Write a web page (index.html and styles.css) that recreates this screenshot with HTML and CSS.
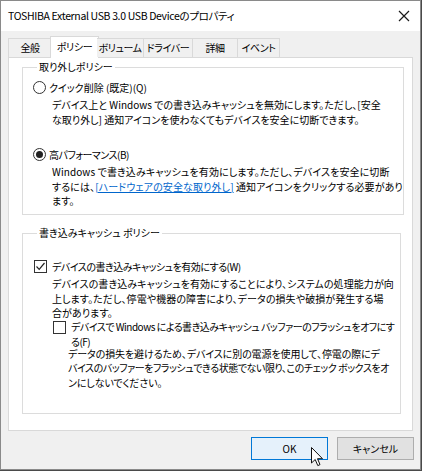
FILE: index.html
```html
<!DOCTYPE html>
<html lang="ja">
<head>
<meta charset="utf-8">
<link rel="stylesheet" href="styles.css">
</head>
<body>
<div class="window">
  <div class="titlebar">
    <span class="title">TOSHIBA External USB 3.0 USB Deviceのプロパティ</span>
    <svg class="close" width="12" height="12" viewBox="0 0 12 12"><path d="M1 1 L11 11 M11 1 L1 11" stroke="#1a1a1a" stroke-width="1.2" fill="none"/></svg>
  </div>
  <div class="client">
    <div class="tabs">
      <div class="tab t1">全般</div>
      <div class="tab t2 selected">ポリシー</div>
      <div class="tab t3">ボリューム</div>
      <div class="tab t4">ドライバー</div>
      <div class="tab t5">詳細</div>
      <div class="tab t6">イベント</div>
    </div>
    <div class="panel">
      <fieldset class="group g1">
        <legend>取り外しポリシー</legend>
        <div class="option opt1"><span class="radio"></span><span>クイック削除 (既定)(Q)</span></div>
        <p class="desc d1">デバイス上と Windows での書き込みキャッシュを無効にします。ただし、[安全<br>な取り外し] 通知アイコンを使わなくてもデバイスを安全に切断できます。</p>
        <div class="option opt2"><span class="radio checked"></span><span>高パフォーマンス(B)</span></div>
        <p class="desc d2">Windows で書き込みキャッシュを有効にします。ただし、デバイスを安全に切断<br>するには、<span class="link">[ハードウェアの安全な取り外し]</span> 通知アイコンをクリックする必要があり<br>ます。</p>
      </fieldset>
      <fieldset class="group g2">
        <legend>書き込みキャッシュ ポリシー</legend>
        <div class="option opt3"><span class="check checked"><svg width="11" height="11" viewBox="0 0 11 11"><path d="M1.5 5.5 L4.2 8.3 L9.5 2" stroke="#222" stroke-width="1.2" fill="none"/></svg></span><span>デバイスの書き込みキャッシュを有効にする(W)</span></div>
        <p class="desc d3">デバイスの書き込みキャッシュを有効にすることにより、システムの処理能力が向<br>上します。ただし、停電や機器の障害により、データの損失や破損が発生する場<br>合があります。</p>
        <div class="option opt4"><span class="check"></span><span class="label2">デバイスで Windows による書き込みキャッシュ バッファーのフラッシュをオフにす<br>る(F)</span></div>
        <p class="desc d4">データの損失を避けるため、デバイスに別の電源を使用して、停電の際にデ<br><span class="tight">バイスのバッファーをフラッシュできる状態でない限り、このチェック ボックスをオ</span><br>ンにしないでください。</p>
      </fieldset>
    </div>
    <div class="buttons">
      <div class="btn default">OK</div>
      <div class="btn">キャンセル</div>
    </div>
  </div>
  <svg class="cursor" width="13" height="20" viewBox="0 0 13 20"><path d="M0.5 0.5 L0.5 16 L4.2 12.5 L6.8 18.6 L9 17.6 L6.5 11.7 L11.5 11.7 Z" fill="#fff" stroke="#111" stroke-width="1" stroke-linejoin="round"/></svg>
</div>
</body>
</html>
```
FILE: styles.css
```css
html, body {
  margin: 0;
  padding: 0;
  background: #4a4a4a;
}
body {
  width: 422px;
  height: 471px;
  overflow: hidden;
  font-family: "Noto Sans CJK JP", "Noto Sans", sans-serif;
  font-size: 10px;
  color: #000;
  font-feature-settings: "palt";
}
.window {
  position: relative;
  width: 419px;
  height: 468px;
  border: 1px solid #8a8a8a;
  background: #f0f0f0;
  display: flex;
  flex-direction: column;
}
.titlebar {
  height: 30px;
  background: #fff;
  display: flex;
  align-items: center;
  justify-content: space-between;
  padding: 0 10px 0 7px;
}
.title {
  line-height: 16px;
  white-space: nowrap;
  font-size: 10.5px;
  letter-spacing: -0.35px;
}
.close {
  display: block;
}
.client {
  flex: 1;
  display: flex;
  flex-direction: column;
  padding: 5px 7px 0 7px;
}
.tabs {
  display: flex;
  height: 21px;
  align-items: flex-end;
  position: relative;
  z-index: 1;
}
.tab {
  height: 19px;
  line-height: 18px;
  text-align: center;
  border: 1px solid #d9d9d9;
  border-bottom: none;
  border-left: none;
  background: #f0f0f0;
  box-sizing: border-box;
  white-space: nowrap;
  letter-spacing: -0.4px;
}
.t1 { width: 44px; border-left: 1px solid #d9d9d9; }
.t3 { width: 47px; }
.t4 { width: 49px; }
.t5 { width: 45px; }
.t6 { width: 42px; }
.tab.selected {
  height: 22px;
  line-height: 19px;
  background: #fff;
  margin: 0 -2px -1px -2px;
  width: 49px;
  border-left: 1px solid #d9d9d9;
}
.panel {
  background: #fff;
  border: 1px solid #d9d9d9;
  height: 374px;
  box-sizing: border-box;
  padding: 2px 11px 0 13px;
  display: flex;
  flex-direction: column;
  gap: 11px;
}
.group {
  margin: 0;
  border: 1px solid #dcdcdc;
  padding: 0 0 0 10px;
}
.group legend {
  padding: 0 2px;
  margin-left: 4px;
  line-height: 14px;
}
.g1 { height: 155px; box-sizing: border-box; }
.g2 { height: 188px; box-sizing: border-box; }
.option {
  display: flex;
  align-items: center;
  gap: 3px;
  line-height: 15px;
}
.opt1 { margin-top: 6px; }
.opt2 { margin-top: 20px; letter-spacing: -0.5px; }
.opt3 { margin-top: 19px; letter-spacing: -0.5px; }
.opt4 { margin-left: 19px; margin-top: -2px; align-items: flex-start; }
.radio {
  width: 11px;
  height: 11px;
  border: 1px solid #333;
  border-radius: 50%;
  display: flex;
  align-items: center;
  justify-content: center;
  flex: none;
}
.radio.checked::after {
  content: "";
  width: 7px;
  height: 7px;
  border-radius: 50%;
  background: #222;
}
.check {
  width: 11px;
  height: 11px;
  border: 1px solid #333;
  display: flex;
  align-items: center;
  justify-content: center;
  flex: none;
  margin-left: 1px;
  margin-right: 2px;
}
.opt4 .check { margin-top: 2px; }
.check svg { display: block; }
.desc {
  margin: 3px 0 0 19px;
  line-height: 14.5px;
  white-space: nowrap;
}
.d2 { letter-spacing: 0.1px; }
.d3 { letter-spacing: 0.08px; }
.d4 { margin-left: 35px; margin-top: -2px; letter-spacing: -0.1px; }
.tight { letter-spacing: -0.45px; }
.label2 { line-height: 15px; white-space: nowrap; letter-spacing: -0.5px; }
.link {
  color: #0066cc;
  text-decoration: underline;
}
.buttons {
  display: flex;
  justify-content: flex-end;
  gap: 9px;
  padding: 6px 0 0 0;
  margin-right: -1px;
}
.btn {
  width: 77px;
  height: 23px;
  box-sizing: border-box;
  border: 1px solid #adadad;
  background: #e1e1e1;
  text-align: center;
  line-height: 21px;
}
.btn.default {
  border: 1px solid #0078d7;
  background: #e5f1fb;
}
.cursor {
  position: absolute;
  left: 310px;
  top: 446px;
}
```
